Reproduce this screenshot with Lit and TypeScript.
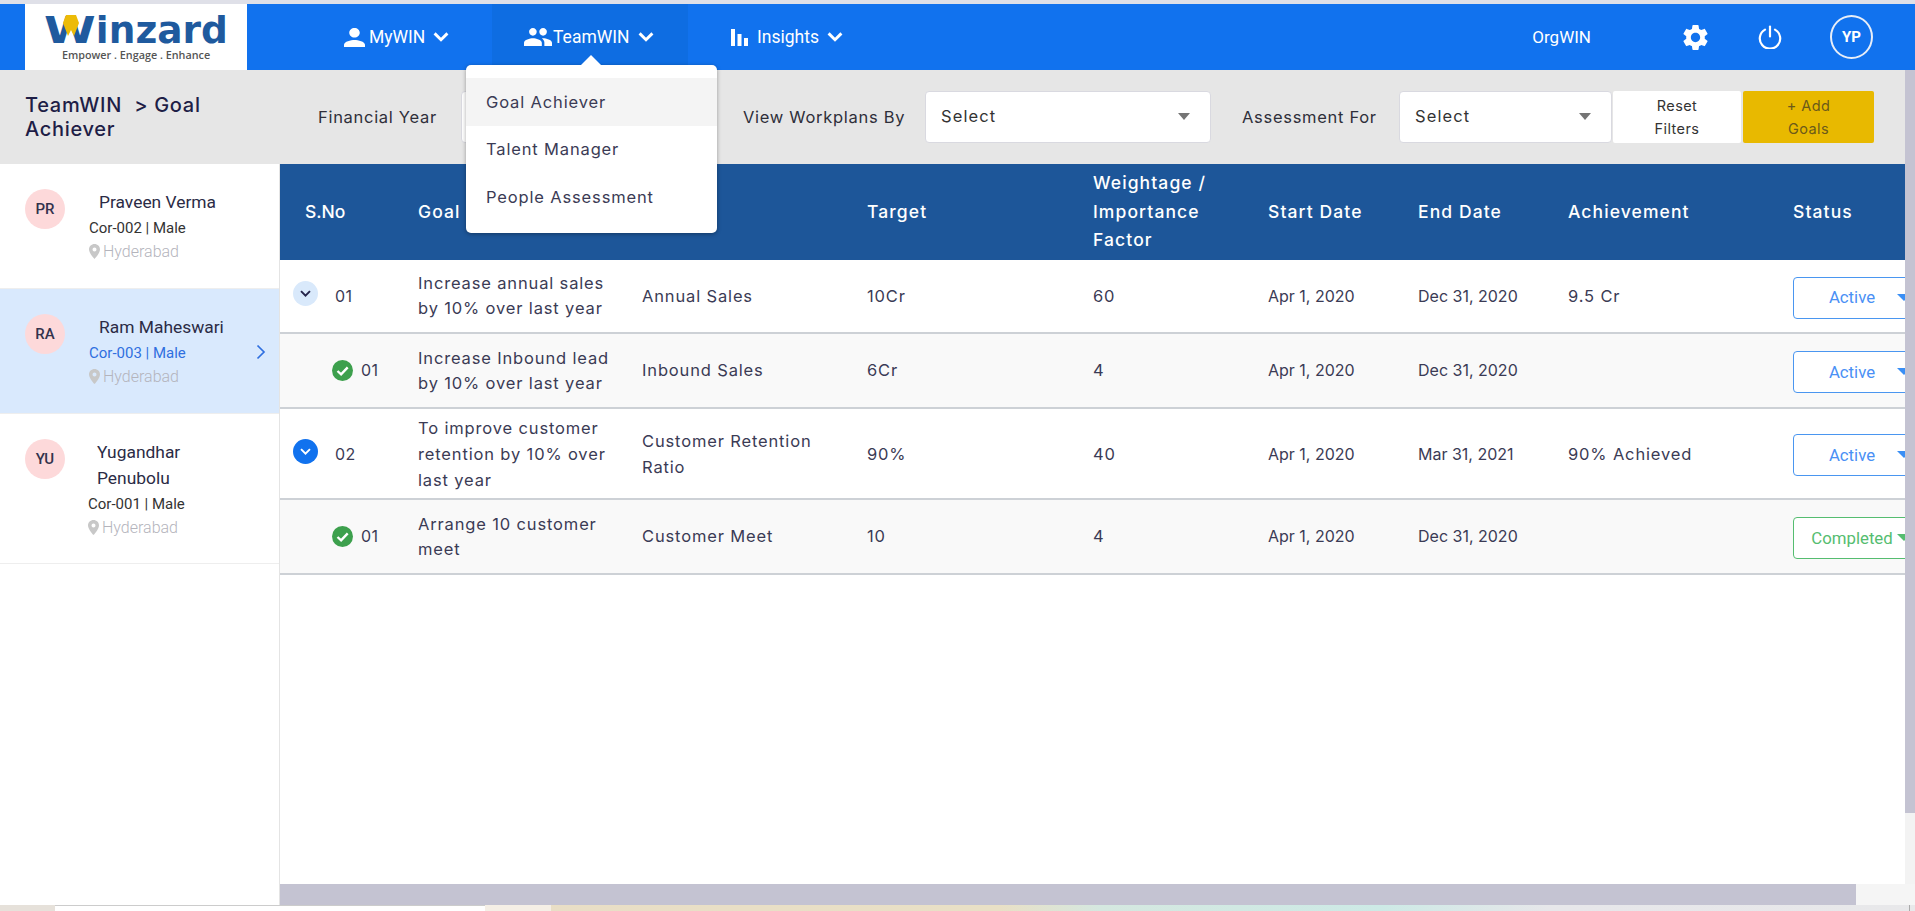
import { LitElement, html, css, svg } from "lit";
import { customElement } from "lit/decorators.js";

const chevron = html`<svg class="chev" viewBox="0 0 16 10"><path d="M1.6 1.4 8 7.8l6.4-6.4" fill="none" stroke="currentColor" stroke-width="2.9"/></svg>`;
const person = svg`<path d="M12 12c2.21 0 4-1.79 4-4s-1.79-4-4-4-4 1.79-4 4 1.79 4 4 4zm0 2c-2.67 0-8 1.34-8 4v2h16v-2c0-2.66-5.33-4-8-4z"/>`;
const group = svg`<path d="M16 11c1.66 0 2.99-1.34 2.99-3S17.66 5 16 5c-1.66 0-3 1.34-3 3s1.34 3 3 3zm-8 0c1.66 0 2.99-1.34 2.99-3S9.66 5 8 5C6.34 5 5 6.34 5 8s1.34 3 3 3zm0 2c-2.33 0-7 1.17-7 3.5V19h14v-2.5c0-2.33-4.67-3.5-7-3.5zm8 0c-.29 0-.62.02-.97.05 1.16.84 1.97 1.97 1.97 3.45V19h6v-2.5c0-2.33-4.67-3.5-7-3.5z"/>`;
const gear = svg`<path d="M19.14 12.94c.04-.3.06-.61.06-.94 0-.32-.02-.64-.07-.94l2.03-1.58c.18-.14.23-.41.12-.61l-1.92-3.32c-.12-.22-.37-.29-.59-.22l-2.39.96c-.5-.38-1.03-.7-1.62-.94l-.36-2.54c-.04-.24-.24-.41-.48-.41h-3.84c-.24 0-.43.17-.47.41l-.36 2.54c-.59.24-1.13.57-1.62.94l-2.39-.96c-.22-.08-.47 0-.59.22L2.74 8.87c-.12.21-.08.47.12.61l2.03 1.58c-.05.3-.09.63-.09.94s.02.64.07.94l-2.03 1.58c-.18.14-.23.41-.12.61l1.92 3.32c.12.22.37.29.59.22l2.39-.96c.5.38 1.03.7 1.62.94l.36 2.54c.05.24.24.41.48.41h3.84c.24 0 .44-.17.47-.41l.36-2.54c.59-.24 1.13-.56 1.62-.94l2.39.96c.22.08.47 0 .59-.22l1.92-3.32c.12-.22.07-.47-.12-.61l-2.01-1.58zM12 15.6c-1.98 0-3.6-1.62-3.6-3.6s1.62-3.6 3.6-3.6 3.6 1.62 3.6 3.6-1.62 3.6-3.6 3.6z"/>`;

const people = [
  { init: "PR", name: "Praveen Verma", code: "Cor-002", cls: "" },
  { init: "RA", name: "Ram Maheswari", code: "Cor-003", cls: "sel" },
  { init: "YU", name: "Yugandhar\nPenubolu", code: "Cor-001", cls: "wrapd" },
];

type Row = { kind: string; no: string; goal: string; kpi: string; target: string; weight: string; start: string; end: string; ach: string; status: string };
const rows: Row[] = [
  { kind: "open", no: "01", goal: "Increase annual sales\nby 10% over last year", kpi: "Annual Sales", target: "10Cr", weight: "60", start: "Apr 1, 2020", end: "Dec 31, 2020", ach: "9.5 Cr", status: "Active" },
  { kind: "sub", no: "01", goal: "Increase Inbound lead\nby 10% over last year", kpi: "Inbound Sales", target: "6Cr", weight: "4", start: "Apr 1, 2020", end: "Dec 31, 2020", ach: "", status: "Active" },
  { kind: "closed", no: "02", goal: "To improve customer\nretention by 10% over\nlast year", kpi: "Customer Retention\nRatio", target: "90%", weight: "40", start: "Apr 1, 2020", end: "Mar 31, 2021", ach: "90% Achieved", status: "Active" },
  { kind: "sub", no: "01", goal: "Arrange 10 customer\nmeet", kpi: "Customer Meet", target: "10", weight: "4", start: "Apr 1, 2020", end: "Dec 31, 2020", ach: "", status: "Completed" },
];

@customElement("app-root")
export class AppRoot extends LitElement {
  static styles = css`
    :host { display: block; height: 911px; width: 1915px; overflow: hidden; background: #fff; font-family: "Inter", "Liberation Sans", sans-serif; color: #3b3b55; }
    .page { display: flex; flex-direction: column; height: 911px; position: relative; }
    .strip { height: 4px; background: #dfe0e8; flex: none; }
    .hdr { height: 66px; flex: none; background: #1172ee; display: flex; align-items: center; color: #fff; font-family: "Roboto", sans-serif; padding-right: 42px; }
    .logo { margin-left: 25px; width: 222px; height: 66px; background: #fff; display: flex; flex-direction: column; align-items: center; position: relative; flex: none; }
    .word { font-family: "DejaVu Sans", sans-serif; font-weight: 700; font-size: 37.5px; line-height: 33px; margin-top: 10px; color: #1f5a9e; white-space: nowrap; }
    .word b { display: inline-block; transform: scaleX(1.25); transform-origin: left center; margin-right: 10.4px; font-weight: 700; }
    .tag { font-family: "Open Sans", sans-serif; font-size: 10.8px; line-height: 14px; color: #555; margin-top: 1px; font-weight: 600; }
    .ymark { position: absolute; left: 38px; top: 11px; width: 16px; height: 21px; }
    .nav { display: flex; align-items: center; height: 66px; font-size: 17.5px; }
    .ni { display: flex; align-items: center; height: 66px; }
    .ni svg.ic { fill: #fff; display: block; flex: none; }
    .chev { width: 16px; height: 10px; margin-left: 8px; flex: none; display: block; }
    .my { margin-left: 97px; width: 148px; }
    .team { width: 196px; padding-left: 32px; box-sizing: border-box; background: #0e6de2; }
    .ins { margin-left: 43px; }
    .right { margin-left: auto; display: flex; align-items: center; }
    .org { font-size: 17px; margin-right: 92px; }
    .gear { margin: 0 -3px; display: block; fill: #fff; }
    .power { margin-left: 50px; margin-right: 48px; display: block; }
    .yp { width: 43px; height: 44px; box-sizing: border-box; border: 2px solid #e8eef8; border-radius: 50%; display: flex; align-items: center; justify-content: center; font-weight: 700; font-size: 15px; }

    .region { flex: 1; display: flex; flex-direction: column; position: relative; min-height: 0; }
    .sub { height: 94px; flex: none; background: #e6e6e6; box-sizing: border-box; padding-left: 25px; display: grid; grid-template-columns: 293px 143px 256px 208px 286px 188px 213px 129px 133px; align-items: center; }
    .crumb { font-size: 20px; line-height: 24px; color: #1e1e46; font-weight: 500; width: 215px; letter-spacing: .7px; }
    .lbl { font-size: 16.5px; color: #2f2f3a; letter-spacing: .7px; white-space: nowrap; }
    .lbl.a { padding-left: 26px; }
    .lbl.b { padding-left: 31px; }
    .sel { height: 52px; background: #fff; border: 1px solid #d9d9e0; border-radius: 4px; box-sizing: border-box; display: flex; align-items: center; justify-content: space-between; padding: 0 20px 2px 15px; font-size: 16.5px; color: #333; letter-spacing: 1.1px; }
    .tri { width: 0; height: 0; border-left: 6.5px solid transparent; border-right: 6.5px solid transparent; border-top: 7px solid #757575; }
    .btn { height: 52px; box-sizing: border-box; text-align: center; font-size: 14.5px; line-height: 23px; padding-top: 3px; border-radius: 2px; letter-spacing: .4px; }
    .reset { background: #fff; color: #333; margin-left: 1px; }
    .add { background: #e8b900; color: #6b5a1a; margin-left: 2px; }

    .body { flex: 1; display: flex; min-height: 0; }
    .side { width: 279px; flex: none; border-right: 1px solid #e4e4e4; font-family: "Roboto", sans-serif; background: #fff; }
    .pitem { display: flex; padding: 25px 0 0 25px; box-sizing: border-box; height: 125px; border-bottom: 1px solid #eee; position: relative; }
    .pitem.wrapd { height: 150px; }
    .pitem.sel2 { background: #d9e9fd; }
    .av { width: 40px; height: 40px; border-radius: 50%; background: #fdd9da; color: #33334d; display: flex; align-items: center; justify-content: center; font-size: 15px; flex: none; font-weight: 500; }
    .info { margin-left: 24px; }
    .wrapd .info { margin-left: 23px; }
    .nm { font-size: 17.4px; line-height: 26px; color: #2b2b45; padding-left: 10px; white-space: pre-line; }
    .wrapd .nm { padding-left: 9px; }
    .cd { font-size: 15px; line-height: 24px; color: #333; padding-top: 1px; }
    .sel2 .cd { color: #2f6fe0; }
    .loc { font-size: 16px; line-height: 23px; color: #b4b4bc; display: flex; align-items: center; font-weight: 300; gap: 3px; }
    .loc svg { width: 11px; height: 15px; fill: #c8c8c8; display: block; }
    .go { position: absolute; right: 13px; top: 55px; width: 10px; height: 16px; display: block; }

    .main { flex: 1; min-width: 0; display: flex; flex-direction: column; }
    .tw { flex: 1; margin-right: 10px; overflow: hidden; background: #fff; min-height: 0; }
    .trow { display: grid; grid-template-columns: 138px 224px 225px 226px 175px 150px 150px 225px 130px; width: 1643px; align-items: center; }
    .th { height: 96px; background: #1d5699; color: #fff; font-size: 17.5px; font-weight: 500; line-height: 28.5px; letter-spacing: 1.1px; }
    .th .first { padding-left: 25px; letter-spacing: 0; }
    .tr { font-size: 16.5px; color: #3b3b55; line-height: 25px; white-space: pre-line; border-bottom: 2px solid #cdd1d6; box-sizing: border-box; letter-spacing: .85px; }
    .tr.open { height: 74px; }
    .tr.sub2 { height: 75px; background: #f9f9f9; }
    .tr.closed { height: 91px; line-height: 26px; }
    .date { letter-spacing: 0; font-size: 16px; }
    .no { display: flex; align-items: center; letter-spacing: .3px; font-size: 16px; }
    .tog { width: 25px; height: 25px; margin-left: 13px; margin-right: 17px; border-radius: 50%; display: flex; align-items: center; justify-content: center; margin-top: -5px; flex: none; }
    .tog svg { width: 11px; height: 7px; margin: 0; display: block; }
    .open .tog { background: #d9e9fb; color: #24244a; }
    .closed .tog { background: #1172ee; color: #fff; }
    .chk { width: 21px; height: 21px; margin-left: 52px; margin-right: 8px; display: block; flex: none; }
    .st { width: 130px; height: 42px; box-sizing: border-box; border: 1px solid #4a96f0; border-radius: 4px; font-family: "Roboto", sans-serif; font-size: 16.8px; color: #4a90f5; display: flex; align-items: center; position: relative; margin-top: 3px; letter-spacing: 0; background: #fff; }
    .st span { width: 116px; text-align: center; }
    .st i { width: 0; height: 0; border-left: 7px solid transparent; border-right: 7px solid transparent; border-top: 7px solid #3a8ff5; position: absolute; left: 103px; top: 16px; }
    .st.done { border-color: #55bd70; color: #55bd70; }
    .st.done i { border-top-color: #55bd70; }
    .hb { height: 21px; flex: none; background: #f5f5f5; }
    .hb div { width: 1576px; height: 21px; background: #c4c3d2; }
    .vtrack { position: absolute; right: 0; top: 0; width: 10px; height: 814px; background: #f3f3f3; }
    .vthumb { height: 743px; background: #c4c3d2; }

    .task { height: 6px; flex: none; display: flex; background: linear-gradient(90deg, #e9dcc6 0, #e9e0c6 1000px, #d5e8e0 1100px, #cdeae6 1380px, #e7e7ea 1550px, #e8e8ea 100%); }
    .task .t1 { width: 55px; background: #e6e1da; }
    .task .t2 { width: 430px; background: #fff; border-top: 1px solid #ccc; box-sizing: border-box; }
    .task .t3 { width: 66px; background: #f5efe6; }
    .task .t4 { width: 1px; background: #aaa; margin-left: auto; margin-right: 5px; }

    .menu { position: absolute; left: 466px; top: 65px; width: 251px; height: 168px; background: #fff; border-radius: 5px; box-shadow: 0 1px 4px rgba(0,0,0,.35); padding-top: 13px; box-sizing: border-box; font-size: 16.5px; color: #3b3b55; letter-spacing: .85px; }
    .menu::before { content: ""; position: absolute; left: 115px; top: -10px; border-left: 10px solid transparent; border-right: 10px solid transparent; border-bottom: 10px solid #fff; }
    .menu div { height: 47.5px; display: flex; align-items: center; padding-left: 20px; }
    .menu div.on { background: #f4f4f4; }
  `;

  render() {
    return html`<div class="page">
      <div class="strip"></div>
      <header class="hdr">
        <div class="logo">
          <div class="word"><b>W</b>inzard</div>
          <div class="tag">Empower . Engage . Enhance</div>
          <svg class="ymark" viewBox="0 0 16 21"><path d="M3 0h10l3 8-5 13-3-6-3 6L0 8z" fill="#ecbb07"/></svg>
        </div>
        <nav class="nav">
          <div class="ni my"><svg class="ic" width="21" height="19" viewBox="4 4 16 16" preserveAspectRatio="none" style="margin-right:4px">${person}</svg>MyWIN${chevron}</div>
          <div class="ni team"><svg class="ic" width="28" height="18" viewBox="1 5 22 14" preserveAspectRatio="none" style="margin-right:1px">${group}</svg>TeamWIN${chevron}</div>
          <div class="ni ins"><svg class="ic" width="17" height="18" viewBox="0 0 17 18" style="margin-right:9px"><rect x="0" y="1" width="4" height="17"/><rect x="6.5" y="6" width="4" height="12"/><rect x="13" y="10" width="4" height="8"/></svg>Insights${chevron}</div>
        </nav>
        <div class="right">
          <span class="org">OrgWIN</span>
          <svg class="gear" width="31" height="31" viewBox="0 0 24 24">${gear}</svg>
          <svg class="power" width="24" height="24" viewBox="0 0 24 24" fill="none" stroke="#fff" stroke-width="2.2" stroke-linecap="round"><path d="M7 4.6a10.2 10.2 0 1 0 10 0"/><path d="M12 1.5v10"/></svg>
          <div class="yp">YP</div>
        </div>
      </header>
      <div class="region">
        <div class="sub">
          <div class="crumb">TeamWIN&nbsp; &gt;&nbsp;Goal Achiever</div>
          <div class="lbl">Financial Year</div>
          <div class="sel"></div>
          <div class="lbl a">View Workplans By</div>
          <div class="sel">Select<span class="tri"></span></div>
          <div class="lbl b">Assessment For</div>
          <div class="sel">Select<span class="tri"></span></div>
          <div class="btn reset">Reset<br />Filters</div>
          <div class="btn add">+ Add<br />Goals</div>
        </div>
        <div class="body">
          <aside class="side">
            ${people.map(
              (p) => html`<div class="pitem ${p.cls === "sel" ? "sel2" : p.cls}">
                <div class="av">${p.init}</div>
                <div class="info">
                  <div class="nm">${p.name}</div>
                  <div class="cd">${p.code} | Male</div>
                  <div class="loc"><svg viewBox="0 0 11 15"><path d="M5.5 0C2.5 0 0 2.4 0 5.4 0 9.2 5.5 15 5.5 15S11 9.2 11 5.4C11 2.4 8.5 0 5.5 0zm0 7.4a2 2 0 1 1 0-4 2 2 0 0 1 0 4z"/></svg>Hyderabad</div>
                </div>
                ${p.cls === "sel" ? html`<svg class="go" viewBox="0 0 10 16"><path d="M1.5 1.5 8 8l-6.5 6.5" fill="none" stroke="#2f6fe0" stroke-width="1.7"/></svg>` : ""}
              </div>`
            )}
          </aside>
          <main class="main">
            <div class="tw">
              <div class="trow th">
                <div class="first">S.No</div><div>Goal</div><div></div><div>Target</div>
                <div>Weightage /<br />Importance<br />Factor</div>
                <div>Start Date</div><div>End Date</div><div>Achievement</div><div>Status</div>
              </div>
              ${rows.map(
                (r) => html`<div class="trow tr ${r.kind === "sub" ? "sub2" : r.kind}">
                  <div class="no">
                    ${r.kind === "sub"
                      ? html`<svg class="chk" viewBox="0 0 21 21"><circle cx="10.5" cy="10.5" r="10.5" fill="#3da04d"/><path d="M5.5 11l3.6 3.4 6.6-7" fill="none" stroke="#fff" stroke-width="2.4"/></svg>`
                      : html`<span class="tog"><svg viewBox="0 0 16 10"><path d="M1.5 1.5 8 8l6.5-6.5" fill="none" stroke="currentColor" stroke-width="2.8"/></svg></span>`}
                    ${r.no}
                  </div>
                  <div>${r.goal}</div><div>${r.kpi}</div><div>${r.target}</div><div>${r.weight}</div>
                  <div class="date">${r.start}</div><div class="date">${r.end}</div><div>${r.ach}</div>
                  <div class="st ${r.status === "Completed" ? "done" : ""}"><span>${r.status}</span><i></i></div>
                </div>`
              )}
            </div>
            <div class="hb"><div></div></div>
          </main>
        </div>
        <div class="vtrack"><div class="vthumb"></div></div>
      </div>
      <div class="task"><div class="t1"></div><div class="t2"></div><div class="t3"></div><div class="t4"></div></div>
      <div class="menu">
        <div class="on">Goal Achiever</div>
        <div>Talent Manager</div>
        <div>People Assessment</div>
      </div>
    </div>`;
  }
}
